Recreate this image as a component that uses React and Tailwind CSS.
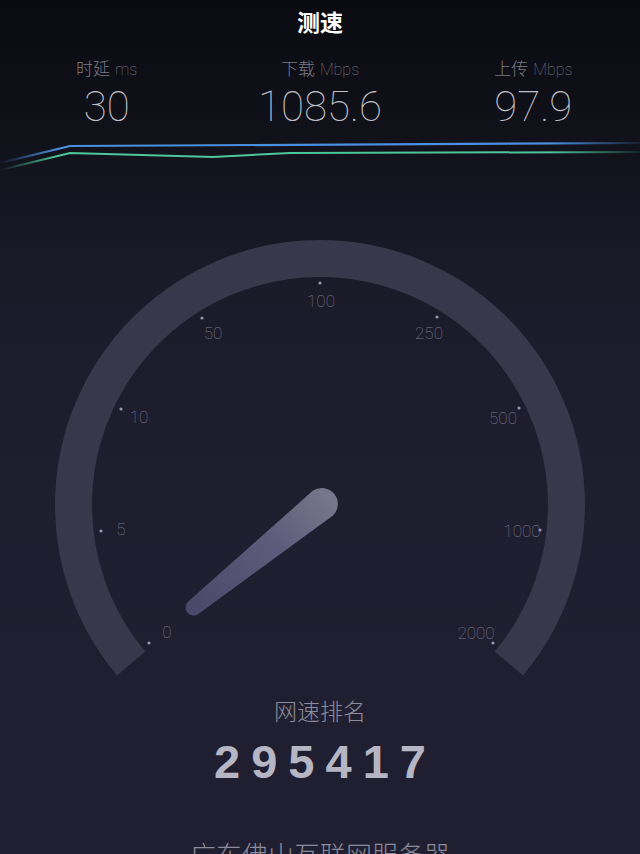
import React from "react";

const ticks = [
  { l: "0", dx: 149, dy: 643, tx: 167, ty: 632 },
  { l: "5", dx: 101, dy: 531, tx: 121, ty: 529 },
  { l: "10", dx: 121, dy: 409, tx: 139, ty: 417 },
  { l: "50", dx: 202, dy: 318, tx: 213, ty: 333 },
  { l: "100", dx: 320, dy: 283, tx: 321, ty: 301 },
  { l: "250", dx: 437, dy: 317, tx: 429, ty: 333 },
  { l: "500", dx: 519, dy: 408, tx: 503, ty: 418 },
  { l: "1000", dx: 540, dy: 530, tx: 522, ty: 531 },
  { l: "2000", dx: 493, dy: 643, tx: 476, ty: 633 },
];

const OFF = 220;

function Stat({ label, unit, value }) {
  return (
    <div className="flex flex-col items-center">
      <div className="flex items-baseline gap-[5px] h-[22px] leading-[22px] text-[#7a7a86]">
        <span className="text-[17px] font-light" style={{ fontFamily: '"Noto Sans CJK SC", sans-serif' }}>{label}</span>
        <span className="text-[16px] font-thin" style={{ fontFamily: 'Roboto, "Liberation Sans", sans-serif' }}>{unit}</span>
      </div>
      <div className="mt-[5px] h-[46px] leading-[46px] text-[42px] font-thin text-[#c0c0c8] font-['Roboto',sans-serif]">
        {value}
      </div>
    </div>
  );
}

export default function App() {
  return (
    <div className="w-[640px] h-[854px] overflow-hidden flex flex-col bg-[linear-gradient(180deg,#0a0a11_0%,#12121c_18%,#1b1a29_32%,#1f1e2f_55%,#201f31_100%)] font-['Noto_Sans_CJK_SC',sans-serif]">
      <div className="h-[220px] shrink-0 flex flex-col">
        <div className="h-[42px] flex items-center justify-center text-[23px] font-bold text-white leading-none">测速</div>
        <div className="grid grid-cols-3 mt-[15px]">
          <Stat label="时延" unit="ms" value="30" />
          <Stat label="下载" unit="Mbps" value="1085.6" />
          <Stat label="上传" unit="Mbps" value="97.9" />
        </div>
        <svg width="640" height="50" viewBox="0 130 640 50" className="block">
          <defs>
            <linearGradient id="gb" gradientUnits="userSpaceOnUse" x1="0" y1="0" x2="640" y2="0">
              <stop offset="0" stopColor="#4a8fe0" stopOpacity="0" />
              <stop offset="0.09" stopColor="#4a8fe0" stopOpacity="1" />
              <stop offset="0.86" stopColor="#4a8fe0" stopOpacity="1" />
              <stop offset="1" stopColor="#4a8fe0" stopOpacity="0.1" />
            </linearGradient>
            <linearGradient id="gg" gradientUnits="userSpaceOnUse" x1="0" y1="0" x2="640" y2="0">
              <stop offset="0" stopColor="#4cc59a" stopOpacity="0" />
              <stop offset="0.09" stopColor="#4cc59a" stopOpacity="1" />
              <stop offset="0.86" stopColor="#4cc59a" stopOpacity="1" />
              <stop offset="1" stopColor="#4cc59a" stopOpacity="0.1" />
            </linearGradient>
          </defs>
          <polyline points="0,163 70,146 640,143" fill="none" stroke="url(#gb)" strokeWidth="2.2" />
          <polyline points="0,170 70,153 213,157 290,153 640,152" fill="none" stroke="url(#gg)" strokeWidth="2" />
        </svg>
      </div>

      <svg width="640" height="470" viewBox={`0 ${OFF} 640 470`} className="block shrink-0">
        <defs>
          <linearGradient id="ng" gradientUnits="userSpaceOnUse" x1="193" y1="608" x2="330" y2="498">
            <stop offset="0" stopColor="#4a496b" />
            <stop offset="0.6" stopColor="#5d5c7a" />
            <stop offset="1" stopColor="#78768c" />
          </linearGradient>
        </defs>
        <path d="M131.2 663.5 A246.5 246.5 0 1 1 508.8 663.5" fill="none" stroke="#38374b" strokeWidth="37" />
        {ticks.map((t) => (
          <g key={t.l}>
            <circle cx={t.dx} cy={t.dy} r="1.6" fill="#9594b0" />
            <text x={t.tx} y={t.ty} textAnchor="middle" dominantBaseline="central" fontSize="17" fontWeight="100" fill="#7a798e" fontFamily="Roboto, 'Liberation Sans', sans-serif">{t.l}</text>
          </g>
        ))}
        <path d="M188 601.8 L313 490.6 A16 16 0 0 1 333 515.4 L198 614.2 A8 8 0 0 1 188 601.8 Z" fill="url(#ng)" />
      </svg>

      <div className="shrink-0 flex flex-col items-center">
        <div className="mt-[6px] h-[28px] leading-[28px] text-[23px] font-light text-[#8c8b9b]">网速排名</div>
        <div className="mt-[14px] h-[48px] leading-[48px] text-[47px] font-bold text-[#b6b5c3] tracking-[11px] pl-[11px] font-['Liberation_Sans',sans-serif]">295417</div>
        <div className="mt-[55px] leading-none text-[26px] text-[#8c8b9b] font-light whitespace-nowrap">广东佛山互联网服务器</div>
      </div>
    </div>
  );
}
